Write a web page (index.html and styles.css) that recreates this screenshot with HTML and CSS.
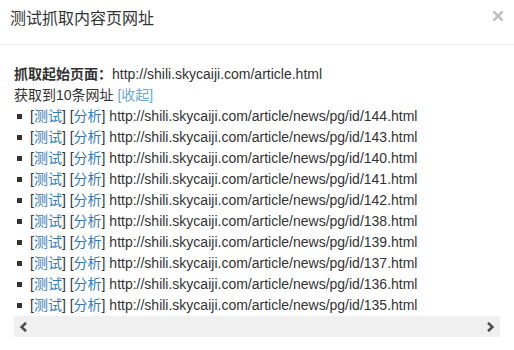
FILE: index.html
```html
<!DOCTYPE html>
<html>
<head>
<meta charset="utf-8">
<link rel="stylesheet" href="styles.css">
</head>
<body>
<div class="dialog">
  <div class="header">
    <span class="title">测试抓取内容页网址</span>
    <span class="close"><svg width="10" height="10" viewBox="0 0 10 10"><path d="M1 1L9 9M9 1L1 9" stroke="#c2c2c2" stroke-width="2.6" stroke-linecap="square"/></svg></span>
  </div>
  <div class="body">
    <div class="line"><b>抓取起始页面：</b>http://shili.skycaiji.com/article.html</div>
    <div class="line">获取到10条网址 <a class="toggle">[收起]</a></div>
    <ul class="urls">
      <li>[<a>测试</a>] [<a>分析</a>] http://shili.skycaiji.com/article/news/pg/id/144.html</li>
      <li>[<a>测试</a>] [<a>分析</a>] http://shili.skycaiji.com/article/news/pg/id/143.html</li>
      <li>[<a>测试</a>] [<a>分析</a>] http://shili.skycaiji.com/article/news/pg/id/140.html</li>
      <li>[<a>测试</a>] [<a>分析</a>] http://shili.skycaiji.com/article/news/pg/id/141.html</li>
      <li>[<a>测试</a>] [<a>分析</a>] http://shili.skycaiji.com/article/news/pg/id/142.html</li>
      <li>[<a>测试</a>] [<a>分析</a>] http://shili.skycaiji.com/article/news/pg/id/138.html</li>
      <li>[<a>测试</a>] [<a>分析</a>] http://shili.skycaiji.com/article/news/pg/id/139.html</li>
      <li>[<a>测试</a>] [<a>分析</a>] http://shili.skycaiji.com/article/news/pg/id/137.html</li>
      <li>[<a>测试</a>] [<a>分析</a>] http://shili.skycaiji.com/article/news/pg/id/136.html</li>
      <li>[<a>测试</a>] [<a>分析</a>] http://shili.skycaiji.com/article/news/pg/id/135.html</li>
    </ul>
    <div class="hscroll">
      <svg width="9" height="10" viewBox="0 0 9 10"><path d="M7 0.8L2.6 5L7 9.2" fill="none" stroke="#4f4f4f" stroke-width="2.6"/></svg>
      <svg width="9" height="10" viewBox="0 0 9 10"><path d="M2 0.8L6.4 5L2 9.2" fill="none" stroke="#4f4f4f" stroke-width="2.6"/></svg>
    </div>
  </div>
</div>
</body>
</html>
```
FILE: styles.css
```css
html, body {
  margin: 0;
  padding: 0;
  background: #fff;
}
body {
  font-family: "Liberation Sans", "Noto Sans CJK SC", sans-serif;
  color: #333;
  font-size: 14px;
  width: 514px;
  height: 350px;
  overflow: hidden;
}
.dialog {
  display: flex;
  flex-direction: column;
}
.header {
  height: 45px;
  box-sizing: border-box;
  padding: 8px 11px 0 10px;
  border-bottom: 1px solid #eeeeee;
  display: flex;
  justify-content: space-between;
  align-items: flex-start;
}
.title {
  font-size: 16px;
  line-height: 21px;
  color: #333;
}
.close {
  display: flex;
  padding-top: 3px;
}
.body {
  padding: 19px 14px 0 14px;
  line-height: 21px;
}
.line b {
  font-weight: bold;
}
a {
  color: #337ab7;
  text-decoration: none;
}
a.toggle {
  color: #6ea6d8;
}
.urls {
  list-style: none;
  margin: 0;
  padding: 0;
}
.urls li {
  display: flex;
  align-items: center;
  white-space: pre;
}
.urls li::before {
  content: "";
  width: 5px;
  height: 5px;
  background: #333;
  margin: 0 8px 0 3px;
  flex: none;
}
.hscroll {
  height: 21px;
  background: #f0f0f0;
  display: flex;
  align-items: center;
  justify-content: space-between;
  padding: 0 5px;
}
```
